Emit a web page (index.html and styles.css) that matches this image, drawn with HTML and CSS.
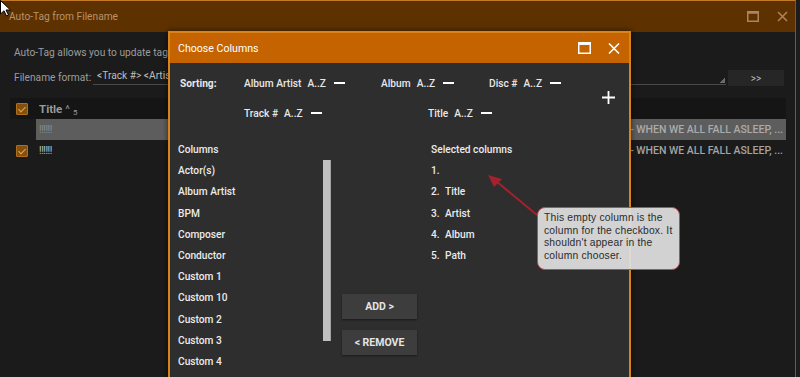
FILE: index.html
```html
<!DOCTYPE html>
<html lang="en">
<head>
  <meta charset="UTF-8">
  <title>Auto-Tag from Filename</title>
  <link rel="stylesheet" href="styles.css">
</head>
<body>

  <!-- Main window -->
  <div class="app">
    <header class="app-titlebar">
      <span class="app-title">Auto-Tag from Filename</span>
      <div class="win-controls">
        <svg width="12" height="11" viewBox="0 0 12 11"><rect x="0.75" y="0.75" width="10.5" height="9.5" fill="none" stroke="currentColor" stroke-width="1.5"/><rect x="0.75" y="0.75" width="10.5" height="2" fill="currentColor"/></svg>
        <svg width="11" height="11" viewBox="0 0 11 11"><path d="M1 1L10 10M10 1L1 10" stroke="currentColor" stroke-width="1.5"/></svg>
      </div>
    </header>

    <div class="app-body">
      <p class="intro">Auto-Tag allows you to update tags based on the filename of each track.</p>

      <div class="format-row">
        <span class="format-label">Filename format:</span>
        <div class="format-input">&lt;Track #&gt; &lt;Artist&gt; - &lt;Album&gt; - &lt;Title&gt;<span class="grip"></span></div>
        <button class="more-btn">&gt;&gt;</button>
      </div>

      <div class="tbl">
        <div class="tbl-head">
          <span class="chk"></span>
          <div class="cells"><b>Title</b><span class="sort-caret">^</span><sub>5</sub></div>
        </div>
        <div class="tbl-row">
          <span class="chk-cell"></span>
          <div class="cells selected"><span class="c-title">!!!!!!</span><span class="c-album">Billie Eilish - WHEN WE ALL FALL ASLEEP, ...</span></div>
        </div>
        <div class="tbl-row">
          <span class="chk"></span>
          <div class="cells"><span class="c-title">!!!!!!</span><span class="c-album">Billie Eilish - WHEN WE ALL FALL ASLEEP, ...</span></div>
        </div>
      </div>
    </div>
  </div>

  <!-- Choose Columns dialog -->
  <div class="dialog">
    <header class="dlg-titlebar">
      <span class="dlg-title">Choose Columns</span>
      <div class="win-controls">
        <svg width="13" height="12" viewBox="0 0 13 12"><rect x="0.75" y="0.75" width="11.5" height="10.5" fill="none" stroke="currentColor" stroke-width="1.5"/><rect x="0.75" y="0.75" width="11.5" height="2.2" fill="currentColor"/></svg>
        <svg width="12" height="11" viewBox="0 0 12 11"><path d="M1 0.5L11 10.5M11 0.5L1 10.5" stroke="currentColor" stroke-width="1.6"/></svg>
      </div>
    </header>

    <div class="dlg-body">
      <div class="sorting">
        <span class="sort-label">Sorting:</span>
        <div class="sort-row">
          <span class="sort-item">Album Artist<em>A..Z</em><i class="dash"></i></span>
          <span class="sort-item">Album<em>A..Z</em><i class="dash"></i></span>
          <span class="sort-item">Disc #<em>A..Z</em><i class="dash"></i></span>
        </div>
        <div class="sort-row second">
          <span class="sort-item">Track #<em>A..Z</em><i class="dash"></i></span>
          <span class="sort-item">Title<em>A..Z</em><i class="dash"></i></span>
        </div>
        <svg class="plus" width="13" height="13" viewBox="0 0 13 13"><path d="M6.5 0V13M0 6.5H13" stroke="#fff" stroke-width="1.8"/></svg>
      </div>

      <div class="chooser">
        <ul class="col-list">
          <li class="list-head">Columns</li>
          <li>Actor(s)</li>
          <li>Album Artist</li>
          <li>BPM</li>
          <li>Composer</li>
          <li>Conductor</li>
          <li>Custom 1</li>
          <li>Custom 10</li>
          <li>Custom 2</li>
          <li>Custom 3</li>
          <li>Custom 4</li>
        </ul>
        <div class="scrollbar"></div>
        <div class="move-btns">
          <button class="move-btn">ADD &gt;</button>
          <button class="move-btn">&lt; REMOVE</button>
        </div>
        <ol class="col-list selected-list">
          <li class="list-head">Selected columns</li>
          <li><span class="num">1.</span></li>
          <li><span class="num">2.</span>Title</li>
          <li><span class="num">3.</span>Artist</li>
          <li><span class="num">4.</span>Album</li>
          <li><span class="num">5.</span>Path</li>
        </ol>
      </div>
    </div>
  </div>

  <!-- Annotation -->
  <svg class="arrow" width="64" height="54" viewBox="0 0 64 54">
    <path d="M57 46L16 12" stroke="#a3222e" stroke-width="2"/>
    <polygon points="8,6 22,10 14,18" fill="#a3222e"/>
  </svg>
  <div class="callout">This empty column is the<br>column for the checkbox. It<br>shouldn't appear in the<br>column chooser.</div>

  <svg class="cursor" width="11" height="17" viewBox="0 0 11 17"><path d="M0.5 0.5V14L4 10.8L6.5 16L8.5 15L6 10H10.5Z" fill="#fff" stroke="#000" stroke-width="1"/></svg>

</body>
</html>
```

FILE: styles.css
```css
/* Base */
* { margin:0; padding:0; box-sizing:border-box; }
body {
  width:800px; height:377px; overflow:hidden; position:relative;
  background:#1d1d1d; color:#e8e8e8;
  font-family:Roboto,'Liberation Sans',sans-serif; font-size:10.2px;
}
ul, ol { list-style:none; }
button { font-family:inherit; border:none; cursor:pointer; }

/* Main window */
.app {
  width:796px; height:377px; background:#1b1b1b;
  border-top:1px solid #c47a24; border-right:1px solid #8c5312;
  display:flex; flex-direction:column;
}
.app-titlebar {
  height:31px; flex:none; background:#5e3100; color:#b8926b;
  display:flex; align-items:center; padding:0 7px 0 9px;
}
.app-title { flex:1; }
.win-controls { display:flex; align-items:center; gap:18px; }
.app-titlebar .win-controls { color:#a98660; }

.app-body { padding:14px 0 0 14px; color:#9d9d9d; line-height:14px; }
.intro { white-space:nowrap; }
.format-row { display:flex; align-items:flex-end; margin-top:9px; height:16px; }
.format-label { width:79px; white-space:nowrap; }
.format-input {
  width:633px; height:16px; position:relative; color:#bdbdbd;
  padding-left:4px; border-bottom:1px solid #4a4a4a;
  white-space:nowrap; overflow:hidden;
}
.grip {
  position:absolute; right:1px; bottom:1px; width:6px; height:6px;
  background:linear-gradient(135deg,transparent 50%,#6a6a6a 50%);
}
.more-btn {
  width:56px; height:16px; margin-left:2px; margin-bottom:-1px;
  background:#262626; color:#bdbdbd; font-size:10px;
}

/* Track table */
.tbl { margin:13px 0 0 -4px; width:776px; }
.tbl-head, .tbl-row { display:grid; grid-template-columns:26px 1fr; align-items:center; }
.tbl-head { height:21px; background:#151515; }
.tbl-row { height:21px; }
.cells { height:100%; display:flex; align-items:center; padding:0 3px 0 3px; }
.cells b { color:#9a9a9a; font-size:11.5px; }
.sort-caret { margin:2px 0 0 3px; font-size:11px; color:#8a8a8a; }
.cells sub { font-size:8px; color:#9a9a9a; margin:8px 0 0 3px; }
.cells.selected { background:#5d5d5d; color:#8c8c8c; }
.c-title { flex:1; letter-spacing:-.5px; }
.c-album { color:#a4a4a4; font-weight:500; font-size:10.5px; }
.cells.selected .c-album { color:#ababab; }
.tbl-row:last-child .c-title { color:#c2c2c2; }
.chk {
  width:12px; height:12px; margin-left:6px; border-radius:1px;
  background:#83500f; border:1px solid #b06f1d; position:relative;
}
.chk::after {
  content:''; position:absolute; left:3px; top:1px; width:3px; height:6px;
  border:solid #eba447; border-width:0 1.5px 1.5px 0; transform:rotate(45deg);
}

/* Dialog */
.dialog {
  position:absolute; left:168px; top:31px; width:463px; height:360px;
  background:#2e2e2e; border:2px solid #d8831b; border-bottom:none;
  box-shadow:0 0 6px rgba(0,0,0,.6);
}
.dlg-titlebar {
  height:30px; background:#c46300; color:#fff; font-size:10.6px;
  display:flex; align-items:center; padding:0 9px 0 8px;
}
.dlg-title { flex:1; }
.dlg-titlebar .win-controls { gap:17px; }

.dlg-body { padding:5px 14px 0 8px; }
.sorting {
  display:grid; grid-template-columns:64px 1fr auto; grid-template-rows:30px 30px;
  align-items:center; padding-left:2px;
}
.sort-label { font-weight:700; grid-row:1; }
.sort-row { grid-column:2; display:grid; grid-template-columns:137px 108px auto; font-weight:500; }
.sort-row.second { grid-row:2; grid-template-columns:184px auto; }
.sort-item { display:flex; align-items:center; }
.sort-item em { font-style:normal; margin-left:6px; }
.dash { width:11px; height:2px; background:#fff; margin-left:8px; }
.plus { grid-column:3; grid-row:1 / 3; margin-top:-1px; }

.chooser {
  display:grid; grid-template-columns:145px 8px 75px 1fr;
  margin-top:11px; align-items:start;
}
.col-list li { height:21.2px; line-height:21.2px; font-weight:500; color:#ebebeb; }
.scrollbar { height:181px; margin-top:21px; background:#c0c0c0; border-right:1px solid #a2a2a2; }
.move-btns {
  margin:155px 0 0 11px; width:75px;
  display:flex; flex-direction:column; gap:11px;
}
.move-btn {
  height:25px; background:#3d3d3d; color:#e4e4e4; font-size:10.5px; font-weight:700;
  box-shadow:0 1px 2px rgba(0,0,0,.45);
}
.selected-list { margin-left:25px; }
.num { display:inline-block; width:14px; }

/* Annotation */
.arrow { position:absolute; left:480px; top:169px; }
.callout {
  position:absolute; left:537px; top:207px; width:143px; height:63px;
  background:rgba(222,222,222,.94); border:1px solid #d1404c; border-radius:8px;
  padding:4px 2px 0 6px; color:#2b2b2b; white-space:nowrap;
  font-family:'Liberation Sans',Arial,sans-serif; font-size:10.3px; line-height:12.6px;
  letter-spacing:.2px;
}
.cursor { position:absolute; left:0; top:0; }
```
